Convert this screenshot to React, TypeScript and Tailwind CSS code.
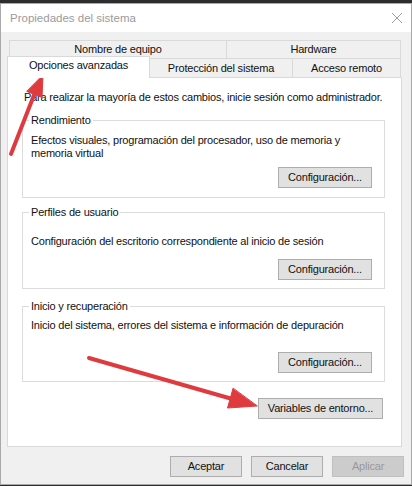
// Cuadro "Propiedades del sistema" (Windows 10), pestaña Opciones avanzadas.
// Dos flechas rojas encima, como en la captura.
const font = { fontFamily: '"Liberation Sans", Arial, sans-serif' };

function WinButton({ label, width, disabled }: { label: string; width: string; disabled?: boolean }) {
  return (
    <button
      type="button"
      className={
        disabled
          ? `${width} h-[21px] shrink-0 border border-[#bfbfbf] bg-[#cccccc] text-[11px] leading-[13px] tracking-[-0.2px] text-[#9a9a9a]`
          : `${width} h-[21px] shrink-0 border border-[#adadad] bg-[#e1e1e1] text-[11px] leading-[13px] tracking-[-0.2px] text-[#111]`
      }
    >
      {label}
    </button>
  );
}

function GroupBox({
  title,
  children,
  className,
}: {
  title: string;
  children: React.ReactNode;
  className: string;
}) {
  return (
    <fieldset className={`ml-[14px] w-[363px] shrink-0 border border-[#dcdcdc] pl-[8px] pr-[12px] ${className}`}>
      <legend className="-ml-[2px] px-[2px] text-[11px] leading-[13px] text-[#111]">{title}</legend>
      {children}
    </fieldset>
  );
}

function Arrows() {
  return (
    <svg
      className="pointer-events-none absolute left-0 top-0"
      width={412}
      height={486}
      viewBox="0 0 412 486"
      aria-hidden="true"
    >
      <g fill="#df3b3f" stroke="#df3b3f" strokeLinecap="round">
        <line x1={11} y1={154} x2={36} y2={90} strokeWidth={4} />
        <polygon points="43,75 42,97.5 27,91.5" strokeWidth={1} />
        <line x1={89} y1={358} x2={234} y2={399.5} strokeWidth={4} />
        <polygon points="257,406 227.5,408 233,388.5" strokeWidth={1} />
      </g>
    </svg>
  );
}

export default function App() {
  return (
    <div className="relative h-[486px] w-[412px] overflow-hidden bg-[#2d2d2d] pt-[3px]" style={font}>
      <div className="flex h-[482px] flex-col overflow-hidden border border-[#a9a9a9] bg-[#f0f0f0]">
        {/* barra de titulo (ventana inactiva) */}
        <div className="flex h-[28px] shrink-0 items-center justify-between bg-white pl-[9px] pr-[8px]">
          <span className="text-[11.5px] leading-[13px] text-[#9b9b9b]">Propiedades del sistema</span>
          <svg width={12} height={12} viewBox="0 0 12 12" aria-hidden="true">
            <path d="M1 1 L11 11 M11 1 L1 11" stroke="#a0a0a0" strokeWidth={1} fill="none" />
          </svg>
        </div>

        <div className="flex shrink-0 flex-col pt-[8px] tracking-[-0.2px]">
          {/* pestañas, dos filas */}
          <div className="ml-[8px] flex h-[18px] shrink-0 text-[11px] leading-[13px] text-[#111]">
            <div className="flex w-[217px] items-center justify-center border-l border-t border-[#d9d9d9]">
              Nombre de equipo
            </div>
            <div className="flex w-[175px] items-center justify-center border-l border-r border-t border-[#d9d9d9]">
              Hardware
            </div>
          </div>
          <div className="ml-[6px] flex h-[19px] shrink-0 items-end text-[11px] leading-[13px] text-[#111]">
            <div className="relative z-10 -mb-[1px] flex h-[22px] w-[143px] items-start justify-center border-l border-r border-t border-[#d9d9d9] bg-white pt-[2px]">
              Opciones avanzadas
            </div>
            <div className="flex h-[19px] w-[143px] items-center justify-center border-r border-t border-[#d9d9d9]">
              Protección del sistema
            </div>
            <div className="flex h-[19px] w-[108px] items-center justify-center border-r border-t border-[#d9d9d9]">
              Acceso remoto
            </div>
          </div>

          {/* panel */}
          <div className="ml-[6px] flex w-[395px] shrink-0 flex-col border border-[#d9d9d9] bg-white pb-[27px] pt-[13px] text-[11px] leading-[13px] text-[#111]">
            <p className="whitespace-nowrap pl-[16px]">
              Para realizar la mayoría de estos cambios, inicie sesión como administrador.
            </p>

            <GroupBox title="Rendimiento" className="mt-[10px] pb-[9px]">
              <p className="mt-[7px] whitespace-nowrap">
                Efectos visuales, programación del procesador, uso de memoria y
                <br />
                memoria virtual
              </p>
              <div className="mt-[7px] flex justify-end">
                <WinButton label="Configuración..." width="w-[94px]" />
              </div>
            </GroupBox>

            <GroupBox title="Perfiles de usuario" className="mt-[8px] pb-[8px]">
              <p className="mt-[16px] whitespace-nowrap">
                Configuración del escritorio correspondiente al inicio de sesión
              </p>
              <div className="mt-[11px] flex justify-end">
                <WinButton label="Configuración..." width="w-[94px]" />
              </div>
            </GroupBox>

            <GroupBox title="Inicio y recuperación" className="mt-[11px] pb-[8px]">
              <p className="mt-[6px] whitespace-nowrap">
                Inicio del sistema, errores del sistema e información de depuración
              </p>
              <div className="mt-[20px] flex justify-end">
                <WinButton label="Configuración..." width="w-[94px]" />
              </div>
            </GroupBox>

            <div className="mt-[16px] flex justify-end pr-[18px]">
              <WinButton label="Variables de entorno..." width="w-[125px]" />
            </div>
          </div>

          <div className="mt-[9px] flex shrink-0 justify-end gap-[9px] pr-[7px]">
            <WinButton label="Aceptar" width="w-[72px]" />
            <WinButton label="Cancelar" width="w-[72px]" />
            <WinButton label="Aplicar" width="w-[72px]" disabled />
          </div>
        </div>
      </div>
      <Arrows />
    </div>
  );
}
